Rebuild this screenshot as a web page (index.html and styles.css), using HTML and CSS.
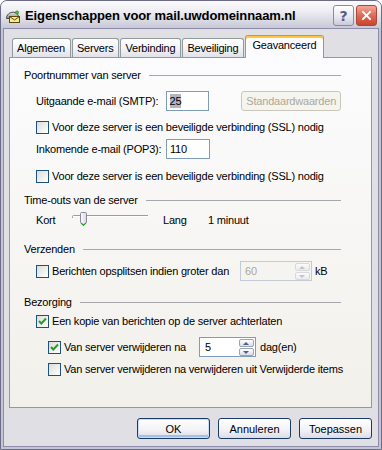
FILE: index.html
```html
<!DOCTYPE html>
<html lang="nl">
<head>
  <meta charset="UTF-8">
  <title>Eigenschappen voor mail.uwdomeinnaam.nl</title>
  <link rel="stylesheet" href="styles.css">
</head>
<body>

  <div class="window">
    <div class="titlebar">
      <svg class="app-icon" width="16" height="16" viewBox="0 0 16 16">
        <defs>
          <linearGradient id="dome" x1="0" y1="0" x2="0" y2="1">
            <stop offset="0" stop-color="#e4e4e4"/>
            <stop offset="1" stop-color="#8c8c8c"/>
          </linearGradient>
        </defs>
        <path d="M1.5 10.5 C1.5 3 12.5 2 13.5 8.5 L13.5 10.5 Z" fill="url(#dome)" stroke="#4a4a4a"/>
        <circle cx="12" cy="4.5" r="1.6" fill="#3cc23c" stroke="#1d7a1d" stroke-width="0.6"/>
        <rect x="4.5" y="8.5" width="10" height="6" fill="#fbe88a" stroke="#5a4a10"/>
        <path d="M4.5 8.5 L9.5 12 L14.5 8.5" fill="none" stroke="#5a4a10"/>
      </svg>
      <span class="title">Eigenschappen voor mail.uwdomeinnaam.nl</span>
      <span class="cap-btn help">?</span>
      <span class="cap-btn close">
        <svg width="21" height="21" viewBox="0 0 21 21">
          <path d="M6.5 6.5 L14.5 14.5 M14.5 6.5 L6.5 14.5" stroke="#fff" stroke-width="2.2" stroke-linecap="round"/>
        </svg>
      </span>
    </div>

    <div class="client">
      <div class="tabs">
        <div class="tab">Algemeen</div>
        <div class="tab">Servers</div>
        <div class="tab">Verbinding</div>
        <div class="tab">Beveiliging</div>
        <div class="tab active">Geavanceerd</div>
      </div>

      <div class="panel">
        <!-- Poortnummer van server -->
        <div class="group">
          <div class="legend">Poortnummer van server</div>
          <div class="row field">
            <span class="field-label smtp">Uitgaande e-mail (SMTP):</span>
            <span class="textbox port"><span class="selected">25</span></span>
            <span class="btn-disabled">Standaardwaarden</span>
          </div>
          <div class="row check-row">
            <span class="box"></span>Voor deze server is een beveiligde verbinding (SSL) nodig
          </div>
          <div class="row field snug">
            <span class="field-label smtp">Inkomende e-mail (POP3):</span>
            <span class="textbox port">110</span>
          </div>
          <div class="row check-row loose">
            <span class="box"></span>Voor deze server is een beveiligde verbinding (SSL) nodig
          </div>
        </div>

        <!-- Time-outs -->
        <div class="group">
          <div class="legend">Time-outs van de server</div>
          <div class="row slider-row snug">
            <span class="kort">Kort</span>
            <svg class="slider" width="77" height="16" viewBox="0 0 77 16">
              <defs>
                <linearGradient id="thumb" x1="0" y1="0" x2="1" y2="0">
                  <stop offset="0" stop-color="#ffffff"/>
                  <stop offset="1" stop-color="#d6d6de"/>
                </linearGradient>
              </defs>
              <path d="M0.5 6 L0.5 4.5 Q0.5 3.5 1.5 3.5 L76 3.5" fill="none" stroke="#9c9ca4"/>
              <path d="M1.5 4.5 L76 4.5" stroke="#ffffff"/>
              <path d="M8.5 1.5 Q8.5 0.5 9.5 0.5 L13.5 0.5 Q14.5 0.5 14.5 1.5 L14.5 10.5 L11.5 13.5 L8.5 10.5 Z" fill="url(#thumb)" stroke="#8a8a9c"/>
              <path d="M9 11 L11.5 13.3 L14 11" fill="none" stroke="#21a121" stroke-width="1.2"/>
            </svg>
            <span class="lang">Lang</span>
            <span>1 minuut</span>
          </div>
        </div>

        <!-- Verzenden -->
        <div class="group spaced">
          <div class="legend">Verzenden</div>
          <div class="row field snug">
            <span class="box"></span>
            <span class="field-label split">Berichten opsplitsen indien groter dan</span>
            <span class="textbox disabled size">60
              <span class="spinner">
                <span class="spin up"></span>
                <span class="spin down"></span>
              </span>
            </span>
            <span class="unit">kB</span>
          </div>
        </div>

        <!-- Bezorging -->
        <div class="group spaced">
          <div class="legend">Bezorging</div>
          <div class="row check-row snug">
            <span class="box checked">
              <svg width="11" height="11" viewBox="0 0 11 11"><path d="M2 5 L4.3 7.5 L9 2.5" fill="none" stroke="#21a121" stroke-width="2"/></svg>
            </span>Een kopie van berichten op de server achterlaten
          </div>
          <div class="row field sub">
            <span class="box checked">
              <svg width="11" height="11" viewBox="0 0 11 11"><path d="M2 5 L4.3 7.5 L9 2.5" fill="none" stroke="#21a121" stroke-width="2"/></svg>
            </span>
            <span class="field-label days">Van server verwijderen na</span>
            <span class="textbox days-box">5
              <span class="spinner active">
                <span class="spin up"></span>
                <span class="spin down"></span>
              </span>
            </span>
            <span class="unit days-unit">dag(en)</span>
          </div>
          <div class="row check-row sub snug">
            <span class="box"></span>Van server verwijderen na verwijderen uit Verwijderde items
          </div>
        </div>
      </div>

      <div class="buttons">
        <button class="btn default">OK</button>
        <button class="btn">Annuleren</button>
        <button class="btn">Toepassen</button>
      </div>
    </div>
  </div>

</body>
</html>
```

FILE: styles.css
```css
* {
  box-sizing: border-box;
}

body {
  margin: 0;
  font-family: "Liberation Sans", Arial, sans-serif;
  font-size: 11px;
  letter-spacing: -0.2px;
  color: #000;
  background: #ffffff;
}

.window {
  width: 382px;
  height: 450px;
  display: flex;
  flex-direction: column;
  background: #c4c4d5;
  border: 1px solid #6c6c89;
  border-radius: 7px 7px 0 0;
  overflow: hidden;
}

/* title bar */
.titlebar {
  height: 28px;
  flex: none;
  display: flex;
  align-items: center;
  padding: 1px 4px 0 4px;
  background: linear-gradient(#fbfbfd 0%, #eeeef3 35%, #dcdce5 65%, #c6c6d5 100%);
}

.app-icon {
  flex: none;
  margin-right: 4px;
}

.title {
  font-weight: bold;
  font-size: 13px;
  letter-spacing: -0.1px;
  white-space: nowrap;
}

.cap-btn {
  width: 21px;
  height: 21px;
  flex: none;
  border: 1px solid #8a8aa4;
  border-radius: 3px;
  display: flex;
  align-items: center;
  justify-content: center;
}

.cap-btn.help {
  margin-left: auto;
  margin-right: 2px;
  background: linear-gradient(#ffffff, #e6e6ee 60%, #c9c9d8);
  color: #5a5a7a;
  font-weight: bold;
  font-size: 14px;
  font-family: "DejaVu Sans", sans-serif;
}

.cap-btn.close {
  border-color: #a8483c;
  background: linear-gradient(#f4a898, #e06a55 50%, #c9442e);
}

/* client area */
.client {
  flex: 1;
  margin: 0 3px 3px;
  background: #e0dfe3;
  box-shadow: 0 0 0 1px #8d8dab;
  padding: 6px 6px 7px 5px;
  display: flex;
  flex-direction: column;
}

.tabs {
  height: 22px;
  flex: none;
  display: flex;
  align-items: flex-end;
  padding-left: 3px;
}

.tab {
  height: 19px;
  padding: 0 5px 0 4px;
  margin-right: 1px;
  border: 1px solid #919b9c;
  border-bottom: none;
  border-radius: 3px 3px 0 0;
  background: linear-gradient(#ffffff, #f4f4f7 50%, #e1e1ea);
  line-height: 18px;
  white-space: nowrap;
}

.tab.active {
  position: relative;
  height: 23px;
  margin: 0 0 -1px 0;
  padding: 0 7px 0 6px;
  background: #fcfcfe;
  border-top: 1px solid #e68b2c;
  box-shadow: inset 0 2px 0 #ffc83c;
  line-height: 19px;
}

.panel {
  height: 351px;
  flex: none;
  border: 1px solid #919b9c;
  background: linear-gradient(#fcfcfe, #f6f5f2 60%, #f1f0ea);
  padding: 10px 30px 0 14px;
}

.group + .group {
  margin-top: 10px;
}

.group.spaced {
  margin-top: 14px;
}

.legend {
  height: 14px;
  display: flex;
  align-items: center;
  gap: 8px;
  white-space: nowrap;
}

.legend::after {
  content: "";
  flex: 1;
  border-top: 1px solid #a7a7b0;
}

.row {
  display: flex;
  align-items: center;
  margin: 9px 0 0 12px;
  white-space: nowrap;
}

.row.snug {
  margin-top: 5px;
}

.row.loose {
  margin-top: 10px;
}

.row.sub {
  margin-left: 24px;
}

.field {
  height: 20px;
}

.check-row {
  height: 14px;
}

.slider-row {
  height: 16px;
}

/* checkbox */
.box {
  width: 13px;
  height: 13px;
  flex: none;
  margin-right: 3px;
  border: 1px solid #1c5180;
  background: linear-gradient(135deg, #dcdcd7, #ffffff);
  display: flex;
  align-items: center;
  justify-content: center;
}

.field-label.smtp {
  width: 130px;
}

.field-label.split {
  width: 188px;
}

.field-label.days {
  width: 135px;
}

/* text boxes */
.textbox {
  height: 20px;
  display: flex;
  align-items: center;
  padding-left: 3px;
  border: 1px solid #7f9db9;
  background: #ffffff;
}

.textbox.port {
  width: 44px;
}

.selected {
  background: #b4b4c2;
  padding: 1px 0;
}

.textbox.size {
  width: 72px;
  padding-left: 4px;
}

.textbox.disabled {
  border-color: #c3ccd6;
  background: #f5f4f0;
  color: #aca899;
}

.textbox.days-box {
  width: 57px;
  padding-left: 5px;
}

.spinner {
  width: 15px;
  height: 17px;
  margin: 0 1px 0 auto;
  display: flex;
  flex-direction: column;
  gap: 1px;
}

.spin {
  flex: 1;
  border: 1px solid #d6d9e0;
  border-radius: 2px;
  background: linear-gradient(#fbfbfb, #ececec);
  position: relative;
}

.spinner.active .spin {
  border-color: #9aa3b6;
  background: linear-gradient(#ffffff, #dcdde6);
}

.spin::after {
  content: "";
  position: absolute;
  left: 3px;
  top: 2px;
  border-left: 3.5px solid transparent;
  border-right: 3.5px solid transparent;
}

.spin.up::after {
  border-bottom: 3px solid #c3c3c3;
}

.spin.down::after {
  border-top: 3px solid #c3c3c3;
}

.spinner.active .spin.up::after {
  border-bottom-color: #4d6185;
}

.spinner.active .spin.down::after {
  border-top-color: #4d6185;
}

.unit {
  margin-left: 3px;
}

.unit.days-unit {
  margin-left: 4px;
}

.btn-disabled {
  width: 100px;
  height: 20px;
  margin-left: 32px;
  border: 1px solid #c9c7ba;
  border-radius: 3px;
  background: #f5f4ef;
  color: #aca899;
  display: flex;
  align-items: center;
  justify-content: center;
}

/* slider */
.kort {
  width: 36px;
}

.slider {
  flex: none;
  align-self: flex-start;
}

.lang {
  width: 45px;
  margin-left: 14px;
}

/* dialog buttons */
.buttons {
  display: flex;
  justify-content: flex-end;
  gap: 8px;
  margin-top: 10px;
}

.btn {
  width: 73px;
  height: 21px;
  padding: 0;
  font: inherit;
  color: #000;
  border: 1px solid #1c3a68;
  border-radius: 3px;
  background: linear-gradient(#ffffff, #f3f3f7 55%, #dcdce6);
}

.btn.default {
  box-shadow: inset 0 0 0 1px #c9dcf8, inset 0 -2px 0 1px #a3bfea;
}
```
